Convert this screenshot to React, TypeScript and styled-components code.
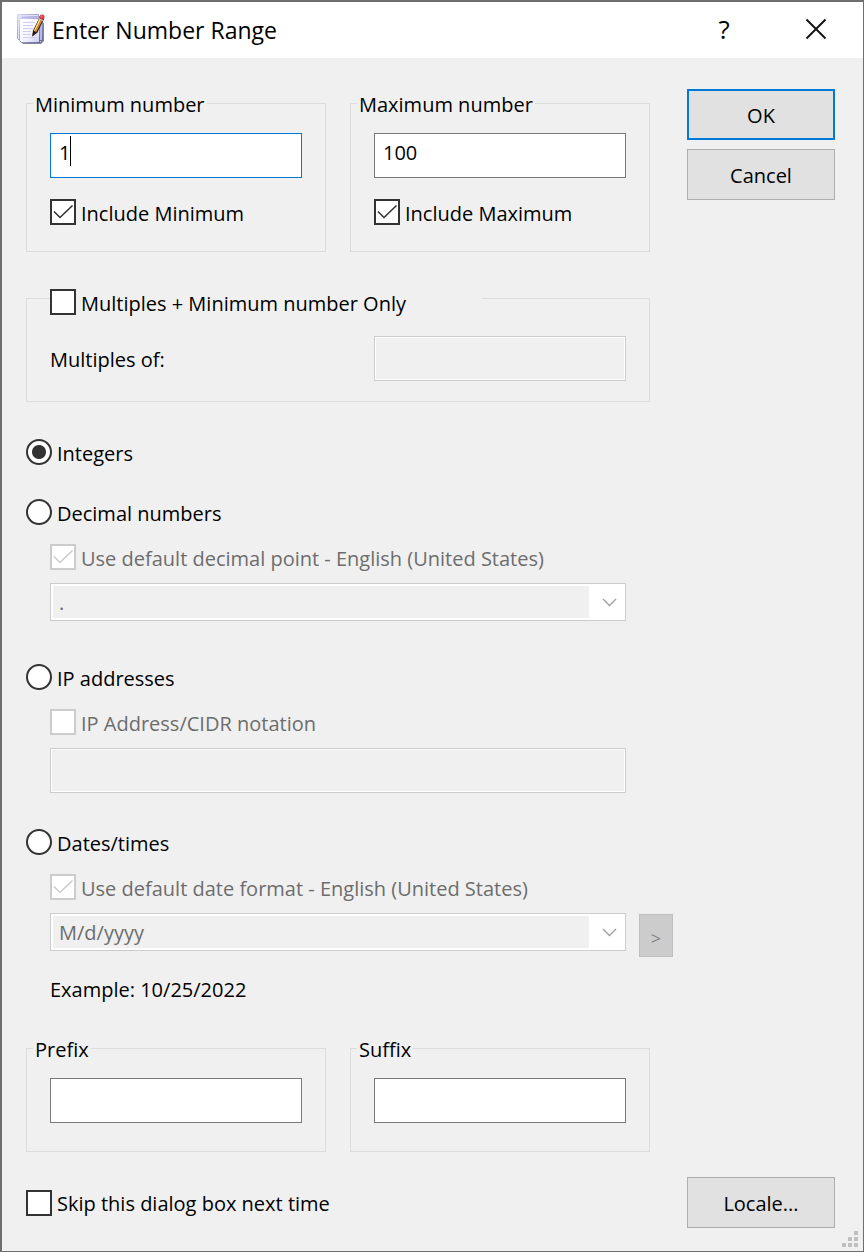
import React, { useId, useState } from "react";
import styled, { createGlobalStyle, css } from "styled-components";

const color = {
  face: "#f0f0f0",
  white: "#ffffff",
  text: "#000000",
  mark: "#333333",
  disabled: "#6d6d6d",
  faint: "#cccccc",
  group: "#dcdcdc",
  accent: "#0078d7",
};

const GlobalStyle = createGlobalStyle`
  *, *::before, *::after { box-sizing: border-box; }
  body {
    margin: 0;
    background: ${color.face};
    color: ${color.text};
    font-family: "Open Sans", "Noto Sans", sans-serif;
    font-size: 20px;
    line-height: 24px;
  }
  button, input, select { font: inherit; color: inherit; margin: 0; }
`;

const Dialog = styled.div`
  display: flex;
  flex-direction: column;
  position: relative;
  min-height: 100vh;
  background: ${color.face};
  border: solid #6e6e6e;
  border-width: 2px 1px 1px 2px;
`;

const TitleBar = styled.header`
  display: flex;
  align-items: stretch;
  height: 56px;
  padding: 0 1px 0 15px;
  background: ${color.white};
`;

const TitleIcon = styled.svg`
  align-self: center;
  flex: none;
  width: 29px;
  height: 32px;
`;

const Title = styled.h1`
  flex: 1;
  align-self: center;
  margin: 0;
  padding-left: 6px;
  font-size: 23px;
  font-weight: 400;
  line-height: 32px;
`;

const TitleButton = styled.button`
  display: flex;
  align-items: center;
  justify-content: center;
  width: 92px;
  padding: 0 0 2px;
  border: 0;
  background: transparent;
  font-size: 26px;
  font-weight: 500;
`;

const Form = styled.form`
  flex: 1;
  display: flex;
  flex-direction: column;
  gap: 25px;
  padding: 31px 28px 23px 24px;
`;

const Columns = styled.div`
  display: grid;
  grid-template-columns: minmax(0, 1fr) 148px;
  column-gap: 14px;
`;

const Settings = styled.div`
  display: flex;
  flex-direction: column;
  padding-top: 3px;
`;

const Actions = styled.div`
  display: flex;
  flex-direction: column;
  gap: 9px;
`;

const Button = styled.button<{ $primary?: boolean }>`
  width: 148px;
  height: 51px;
  padding: 2px 0 0;
  background: #e1e1e1;
  border: ${(p) => (p.$primary ? `2px solid ${color.accent}` : "1px solid #adadad")};
`;

const Groups = styled.div`
  display: grid;
  grid-template-columns: 1fr 1fr;
  column-gap: 24px;
  row-gap: 29px;
  padding-right: 23px;
`;

const Group = styled.fieldset<{ $wide?: boolean }>`
  min-width: 0;
  margin: 0;
  padding: 0 6px;
  border: 1px solid ${color.group};
  ${(p) => p.$wide && css`grid-column: 1 / -1;`}
`;

const Legend = styled.legend`
  padding: 3px 2px 0;
  line-height: 20px;
`;

const CheckLegend = styled.legend`
  width: 432px;
  max-width: 100%;
  margin-left: 17px;
  padding: 8px 0 0;
`;

const GroupBody = styled.div<{ $end: number }>`
  display: flex;
  flex-direction: column;
  gap: 21px;
  padding: 18px 17px ${(p) => p.$end}px;
`;

const SplitRow = styled.div`
  display: grid;
  grid-template-columns: 1fr 1fr;
  column-gap: 72px;
  align-items: center;
  padding: 21px 17px 20px;
`;

const FieldLabel = styled.label`
  padding-top: 2px;
`;

const TextBox = styled.input<{ $active?: boolean }>`
  display: block;
  width: 100%;
  height: 45px;
  padding: 0 8px 6px;
  background: ${color.white};
  border: 1px solid ${(p) => (p.$active ? color.accent : "#7a7a7a")};
  border-radius: 0;
  outline: none;
  caret-color: transparent;

  &:disabled {
    background: ${color.face};
    border-color: ${color.faint};
    box-shadow: inset 0 0 0 1px ${color.white};
  }
`;

const CaretField = styled.div`
  position: relative;
`;

const Caret = styled.span`
  position: absolute;
  left: 20px;
  top: 3px;
  width: 1px;
  height: 30px;
  background: ${color.text};
`;

const OptionLabel = styled.label<{ $disabled?: boolean }>`
  display: flex;
  align-items: center;
  gap: 5px;
  height: 26px;
  color: ${(p) => (p.$disabled ? color.disabled : color.text)};
`;

const OptionText = styled.span`
  padding-top: 3px;
`;

const MarkBox = styled.span`
  display: grid;
  flex: none;
  width: 26px;
  height: 26px;

  > * {
    grid-area: 1 / 1;
  }
`;

const Tick = styled.svg<{ $disabled?: boolean }>`
  width: 26px;
  height: 26px;
  z-index: 1;
  pointer-events: none;
  fill: none;
  stroke: ${(p) => (p.$disabled ? color.faint : color.mark)};
  stroke-width: 1.6;
`;

const markStyle = css`
  appearance: none;
  width: 26px;
  height: 26px;
  background: ${color.white};
  border: 2px solid ${color.mark};

  &:disabled {
    border-color: ${color.faint};
  }
`;

const CheckInput = styled.input`
  ${markStyle}
`;

const RadioInput = styled.input`
  ${markStyle}
  flex: none;
  border-radius: 50%;

  &:checked {
    background: radial-gradient(circle, ${color.mark} 6.5px, ${color.white} 7.5px);
  }
`;

const Section = styled.section<{ $before: number }>`
  display: flex;
  flex-direction: column;
  gap: 19px;
  margin-top: ${(p) => p.$before}px;
`;

const Details = styled.div`
  display: flex;
  flex-direction: column;
  gap: 13px;
  padding-left: 24px;
`;

const FieldRow = styled.div<{ $inset?: boolean }>`
  display: flex;
  align-items: flex-start;
  gap: 13px;
  padding-right: ${(p) => (p.$inset ? 47 : 0)}px;
`;

const Combo = styled.div`
  display: flex;
  flex: 1;
  min-width: 0;
  height: 38px;
  padding: 2px;
  background: ${color.white};
  border: 1px solid ${color.faint};
`;

const Select = styled.select`
  appearance: none;
  flex: 1;
  min-width: 0;
  padding: 2px 6px 0;
  background: ${color.face};
  border: 0;
  border-radius: 0;

  &:disabled {
    color: ${color.disabled};
    opacity: 1;
  }
`;

const Chevron = styled.svg`
  align-self: center;
  width: 34px;
  height: 32px;
  fill: none;
  stroke: #a0a0a0;
  stroke-width: 1.4;
`;

const MoreButton = styled.button`
  width: 34px;
  height: 43px;
  margin-top: 1px;
  padding: 4px 0 0;
  background: ${color.faint};
  border: 1px solid #bfbfbf;
  color: #838383;
  font-size: 18px;
`;

const Example = styled.p`
  margin: 8px 0 35px;
`;

const Footer = styled.footer`
  display: flex;
  align-items: center;
  justify-content: space-between;
`;

const Grip = styled.svg`
  position: absolute;
  right: 5px;
  bottom: 4px;
  width: 16px;
  height: 16px;
  fill: #bfbfbf;
`;

type CheckProps = { label: string; initial?: boolean; disabled?: boolean };

function Check({ label, initial = false, disabled }: CheckProps) {
  const [checked, setChecked] = useState(initial);
  return (
    <OptionLabel $disabled={disabled}>
      <MarkBox>
        <CheckInput
          type="checkbox"
          checked={checked}
          disabled={disabled}
          onChange={(e) => setChecked(e.target.checked)}
        />
        {checked && (
          <Tick $disabled={disabled} viewBox="0 0 26 26" aria-hidden="true">
            <path d="M4 12.500 10 18.500 22.500 6.500" />
          </Tick>
        )}
      </MarkBox>
      <OptionText>{label}</OptionText>
    </OptionLabel>
  );
}

type Kind = "integers" | "decimals" | "ip" | "dates";

type KindProps = { label: string; value: Kind; current: Kind; onPick: (k: Kind) => void };

function KindRadio({ label, value, current, onPick }: KindProps) {
  return (
    <OptionLabel>
      <RadioInput
        type="radio"
        name="kind"
        value={value}
        checked={current === value}
        onChange={() => onPick(value)}
      />
      <OptionText>{label}</OptionText>
    </OptionLabel>
  );
}

function ComboBox({ name, value }: { name: string; value: string }) {
  return (
    <Combo>
      <Select aria-label={name} disabled defaultValue={value}>
        <option>{value}</option>
      </Select>
      <Chevron viewBox="0 0 34 32" aria-hidden="true">
        <path d="M14 13 20.500 19.500 27 13" />
      </Chevron>
    </Combo>
  );
}

type TextGroupProps = {
  title: string;
  value?: string;
  end: number;
  active?: boolean;
  children?: React.ReactNode;
};

function TextGroup({ title, value = "", end, active, children }: TextGroupProps) {
  const id = useId();
  return (
    <Group>
      <Legend id={id}>{title}</Legend>
      <GroupBody $end={end}>
        <CaretField>
          <TextBox type="text" aria-labelledby={id} defaultValue={value} $active={active} />
          {active && <Caret />}
        </CaretField>
        {children}
      </GroupBody>
    </Group>
  );
}

function NotepadIcon() {
  return (
    <TitleIcon viewBox="0 0 29 32" aria-hidden="true">
      <defs>
        <linearGradient id="sheet" x1="0" y1="0" x2="1" y2="1">
          <stop offset="0" stopColor="#ffffff" />
          <stop offset="0.6" stopColor="#f4f4ff" />
          <stop offset="1" stopColor="#c9c9ee" />
        </linearGradient>
        <linearGradient id="edge" x1="0" y1="0" x2="1" y2="1">
          <stop offset="0" stopColor="#d4d4fa" />
          <stop offset="1" stopColor="#6868a8" />
        </linearGradient>
      </defs>
      <path d="M4 28H23L25 26V8L27 9V27L24 30H6Z" fill="#85858d" />
      <path d="M0.500 0.500H21.500V26.500H2.500L0.500 24.500Z" fill="#e2e2fc" stroke="url(#edge)" />
      <path d="M4.500 2.500H25.500V26.500H4.500Z" fill="#b9b9e6" stroke="url(#edge)" />
      <path d="M2.500 4.500H22.500V28.500H4.500L2.500 26.500Z" fill="url(#sheet)" stroke="url(#edge)" />
      <path
        d="M6 8.500H18M6 11.500H16M6 14.500H16M6 17.500H14M6 20.500H14M6 23.500H19"
        stroke="#cfcff2"
        fill="none"
      />
      <path d="M23 2.500 27.300 4.500 20.500 18.500 15.300 22.500 16 16.500Z" fill="#3f2614" />
      <path d="M22.800 4 24.400 4.900 18 17.500 16.900 16.500Z" fill="#ffdf86" />
      <path d="M24.400 4.900 25.700 5.700 19.200 18 18 17.500Z" fill="#e88a2c" />
      <path d="M16.200 17 19.500 18.600 15.300 22.500Z" fill="#1c1c1c" />
      <path d="M22.600 4 26.200 5.900 25.700 7.100 22 5.300Z" fill="#c8c8d0" />
      <circle cx="25" cy="2.900" r="2.500" fill="#d83a3a" />
      <circle cx="24.500" cy="2.400" r="0.900" fill="#f58b82" />
    </TitleIcon>
  );
}

export default function App() {
  const [kind, setKind] = useState<Kind>("integers");

  return (
    <>
      <GlobalStyle />
      <Dialog role="dialog" aria-labelledby="dialog-title">
        <TitleBar>
          <NotepadIcon />
          <Title id="dialog-title">Enter Number Range</Title>
          <TitleButton type="button" aria-label="Help">?</TitleButton>
          <TitleButton type="button" aria-label="Close">
            <svg width="22" height="22" viewBox="0 0 22 22" aria-hidden="true">
              <path d="M1.500 1.500 20.500 20.500M20.500 1.500 1.500 20.500" stroke="#111" strokeWidth="1.900" />
            </svg>
          </TitleButton>
        </TitleBar>

        <Form onSubmit={(e) => e.preventDefault()}>
          <Columns>
            <Settings>
              <Groups>
                <TextGroup title="Minimum number" value="1" end={26} active>
                  <Check label="Include Minimum" initial />
                </TextGroup>
                <TextGroup title="Maximum number" value="100" end={26}>
                  <Check label="Include Maximum" initial />
                </TextGroup>
                <Group $wide>
                  <CheckLegend>
                    <Check label="Multiples + Minimum number Only" />
                  </CheckLegend>
                  <SplitRow>
                    <FieldLabel htmlFor="multiples">Multiples of:</FieldLabel>
                    <TextBox id="multiples" type="text" disabled />
                  </SplitRow>
                </Group>
              </Groups>

              <Section $before={37}>
                <KindRadio label="Integers" value="integers" current={kind} onPick={setKind} />
              </Section>

              <Section $before={34}>
                <KindRadio label="Decimal numbers" value="decimals" current={kind} onPick={setKind} />
                <Details>
                  <Check label="Use default decimal point - English (United States)" initial disabled />
                  <FieldRow $inset>
                    <ComboBox name="Decimal point" value="." />
                  </FieldRow>
                </Details>
              </Section>

              <Section $before={43}>
                <KindRadio label="IP addresses" value="ip" current={kind} onPick={setKind} />
                <Details>
                  <Check label="IP Address/CIDR notation" disabled />
                  <FieldRow $inset>
                    <TextBox type="text" aria-label="IP address" disabled />
                  </FieldRow>
                </Details>
              </Section>

              <Section $before={36}>
                <KindRadio label="Dates/times" value="dates" current={kind} onPick={setKind} />
                <Details>
                  <Check label="Use default date format - English (United States)" initial disabled />
                  <FieldRow>
                    <ComboBox name="Date format" value="M/d/yyyy" />
                    <MoreButton type="button" aria-label="Insert format element" disabled>
                      &gt;
                    </MoreButton>
                  </FieldRow>
                  <Example>Example: 10/25/2022</Example>
                </Details>
              </Section>

              <Groups>
                <TextGroup title="Prefix" end={28} />
                <TextGroup title="Suffix" end={28} />
              </Groups>
            </Settings>

            <Actions>
              <Button type="submit" $primary>OK</Button>
              <Button type="button">Cancel</Button>
            </Actions>
          </Columns>

          <Footer>
            <Check label="Skip this dialog box next time" />
            <Button type="button">Locale...</Button>
          </Footer>
        </Form>

        <Grip viewBox="0 0 16 16" aria-hidden="true">
          <path d="M12 0h4v4h-4zM6 6h4v4h-4zM12 6h4v4h-4zM0 12h4v4h-4zM6 12h4v4h-4zM12 12h4v4h-4z" />
        </Grip>
      </Dialog>
    </>
  );
}
